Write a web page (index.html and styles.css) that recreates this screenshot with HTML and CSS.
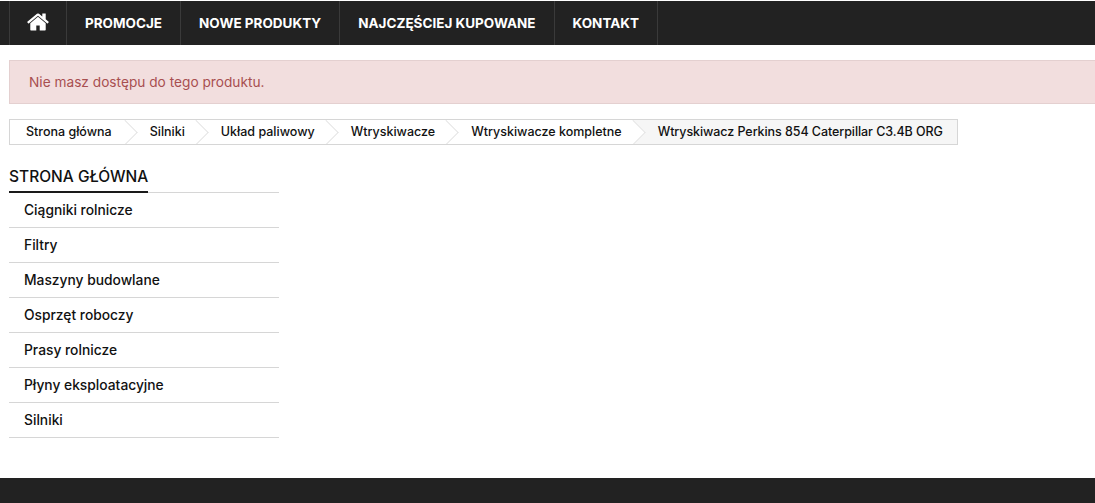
FILE: index.html
```html
<!DOCTYPE html>
<html lang="pl">
<head>
    <meta charset="UTF-8">
    <meta name="viewport" content="width=device-width, initial-scale=1.0">
    <title>Wtryskiwacz Perkins 854 Caterpillar C3.4B ORG</title>
    <link rel="stylesheet" href="styles.css">
</head>
<body>
    <header class="top-bar">
        <nav class="main-nav">
            <a class="nav-link nav-home" href="#" aria-label="Strona główna">
                <svg class="home-icon" viewBox="0 0 1792 1792" aria-hidden="true"><path d="M1472 992v480q0 26-19 45t-45 19h-384v-384h-256v384h-384q-26 0-45-19t-19-45v-480q0-1 .5-3t.5-3l575-474 575 474q1 2 1 6zm223-69l-62 74q-8 9-21 11h-3q-13 0-21-7l-692-577-692 577q-12 8-24 7-13-2-21-11l-62-74q-8-10-7-23.5t11-21.5l719-599q32-26 76-26t76 26l244 204v-195q0-14 9-23t23-9h192q14 0 23 9t9 23v408l219 182q10 8 11 21.5t-7 23.5z"/></svg>
            </a>
            <a class="nav-link" href="#">PROMOCJE</a>
            <a class="nav-link" href="#">NOWE PRODUKTY</a>
            <a class="nav-link" href="#">NAJCZĘŚCIEJ KUPOWANE</a>
            <a class="nav-link" href="#">KONTAKT</a>
        </nav>
    </header>

    <main class="page">
        <div class="alert">Nie masz dostępu do tego produktu.</div>

        <ol class="breadcrumb">
            <li class="crumb"><a href="#">Strona główna</a></li>
            <li class="crumb"><a href="#">Silniki</a></li>
            <li class="crumb"><a href="#">Układ paliwowy</a></li>
            <li class="crumb"><a href="#">Wtryskiwacze</a></li>
            <li class="crumb"><a href="#">Wtryskiwacze kompletne</a></li>
            <li class="crumb current">Wtryskiwacz Perkins 854 Caterpillar C3.4B ORG</li>
        </ol>

        <aside class="side-menu">
            <div class="side-heading"><h2>STRONA GŁÓWNA</h2></div>
            <ul class="side-list">
                <li><a href="#">Ciągniki rolnicze</a></li>
                <li><a href="#">Filtry</a></li>
                <li><a href="#">Maszyny budowlane</a></li>
                <li><a href="#">Osprzęt roboczy</a></li>
                <li><a href="#">Prasy rolnicze</a></li>
                <li><a href="#">Płyny eksploatacyjne</a></li>
                <li><a href="#">Silniki</a></li>
            </ul>
        </aside>
    </main>

    <footer class="bottom-bar"></footer>
</body>
</html>
```

FILE: styles.css
```css
html, body {
    margin: 0;
    padding: 0;
}

body {
    height: 503px;
    overflow: hidden;
    background: #fff;
    color: #111;
    font-family: Inter, "Liberation Sans", sans-serif;
    display: flex;
    flex-direction: column;
}

a {
    color: inherit;
    text-decoration: none;
}

/* top menu */
.top-bar {
    margin-top: 1px;
    height: 44px;
    background: #222;
    padding-left: 9px;
    flex: none;
}

.main-nav {
    display: flex;
    height: 100%;
}

.nav-link {
    display: flex;
    align-items: center;
    padding: 0 18px;
    border-left: 1px solid #3a3a3a;
    color: #fff;
    font-size: 13.5px;
    font-weight: 700;
}

.nav-link:last-child {
    border-right: 1px solid #3a3a3a;
}

.nav-home {
    width: 57px;
    box-sizing: border-box;
    justify-content: center;
    padding: 0;
}

.home-icon {
    width: 24px;
    height: 24px;
    fill: #fff;
    margin-top: -3px;
}

/* content */
.page {
    flex: 1;
    padding: 15px 0 0 9px;
}

.alert {
    box-sizing: border-box;
    height: 44px;
    margin-right: -20px;
    padding: 0 19px;
    display: flex;
    align-items: center;
    background: #f2dede;
    border: 1px solid #e4d0d0;
    color: #a84f50;
    font-size: 13.7px;
}

/* breadcrumb */
.breadcrumb {
    display: inline-flex;
    height: 26px;
    box-sizing: border-box;
    margin: 15px 0 0;
    padding: 0;
    list-style: none;
    border: 1px solid #d6d6d6;
    font-size: 12.5px;
    font-weight: 500;
    overflow: hidden;
    vertical-align: top;
}

.crumb {
    position: relative;
    display: flex;
    align-items: center;
    padding: 0 24px 1px 12px;
    white-space: nowrap;
}

.crumb:first-child {
    padding-left: 16px;
    padding-right: 26px;
}

.crumb::after {
    content: "";
    position: absolute;
    z-index: 1;
    top: 3px;
    right: 4px;
    width: 18px;
    height: 18px;
    background: #fff;
    border-top: 1px solid #dedede;
    border-right: 1px solid #dedede;
    transform: rotate(45deg);
    clip-path: polygon(0 0, 100% 0, 100% 100%);
}

.crumb.current {
    flex: 1;
    margin-left: -13px;
    padding: 0 14px 1px 25px;
    background: #f6f6f6;
    letter-spacing: -0.07px;
}

.crumb.current::after {
    display: none;
}

/* side menu */
.side-menu {
    width: 270px;
    margin-top: 17px;
}

.side-heading {
    border-bottom: 1px solid #d6d6d6;
    height: 31px;
    box-sizing: border-box;
}

.side-heading h2 {
    display: inline-block;
    box-sizing: border-box;
    height: 31px;
    margin: 0;
    padding-top: 3px;
    border-bottom: 2px solid #1a1a1a;
    font-size: 15.5px;
    line-height: 24px;
    font-weight: 500;
}

.side-list {
    margin: 0;
    padding: 0;
    list-style: none;
}

.side-list li {
    height: 35px;
    box-sizing: border-box;
    border-bottom: 1px solid #d6d6d6;
    padding: 0 0 1px 15px;
    display: flex;
    align-items: center;
    font-size: 13.8px;
    font-weight: 500;
}

/* footer */
.bottom-bar {
    height: 25px;
    background: #222;
    flex: none;
}
```
